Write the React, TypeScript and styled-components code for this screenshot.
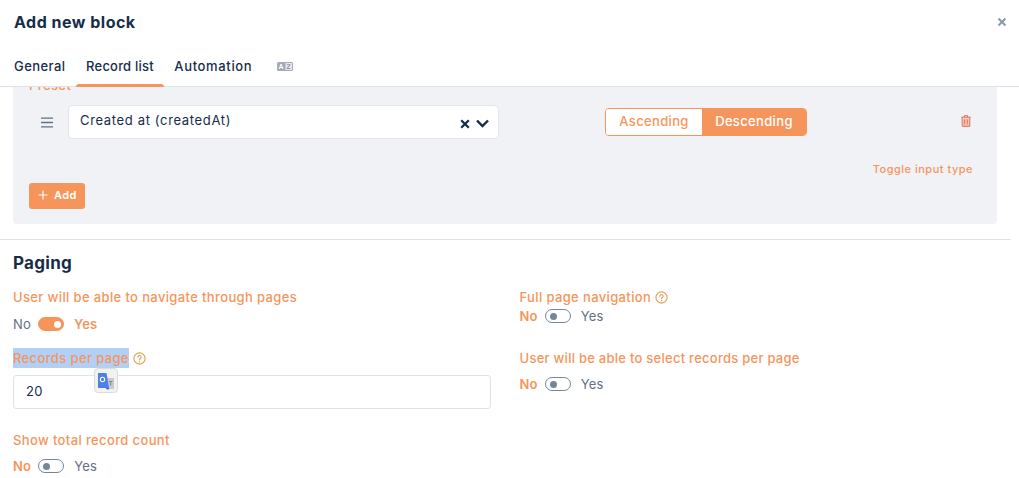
import React from 'react';
import styled, { createGlobalStyle } from 'styled-components';

const navy = '#162d4a';
const orange = '#f6955b';
const slate = '#5f7186';
const switchGrey = '#75869a';

const GlobalStyle = createGlobalStyle`
  html, body {
    margin: 0;
    height: 100%;
    overflow: hidden;
    background: #fff;
  }
  body {
    font-family: Inter, "Open Sans", sans-serif;
    color: ${navy};
  }
`;

const Modal = styled.div`
  width: 1019px;
  height: 478px;
  display: flex;
  flex-direction: column;
  overflow: hidden;
  position: relative;
`;

const Header = styled.header`
  height: 44px;
  display: flex;
  align-items: center;
  justify-content: space-between;
  padding: 0 12px 0 14px;
  flex: none;
`;

const Title = styled.h1`
  margin: 0;
  font-size: 16px;
  line-height: 20px;
  font-weight: 700;
  letter-spacing: 0.5px;
`;

const CloseButton = styled.button`
  border: 0;
  padding: 0;
  background: none;
  width: 10px;
  height: 10px;
  display: flex;
`;

const Tabs = styled.nav`
  height: 43px;
  flex: none;
  display: flex;
  align-items: flex-start;
  padding-left: 3.75px;
  border-bottom: 1px solid #dfe2e8;
  box-sizing: border-box;
`;

const Tab = styled.button<{ $active?: boolean; $tracking?: number }>`
  position: relative;
  border: 0;
  background: none;
  height: 43px;
  padding: 1px 10.25px 0;
  font: 500 13px/20px Inter, sans-serif;
  letter-spacing: ${(p) => p.$tracking ?? 0.45}px;
  color: ${navy};
  display: block;

  ${(p) =>
    p.$active &&
    `
    &::after {
      content: '';
      position: absolute;
      left: 0;
      right: 0;
      bottom: 0;
      height: 3px;
      background: ${orange};
      border-radius: 3px 3px 0 0;
    }
  `}
`;

const IconTab = styled(Tab)`
  padding: 1px 0 0 14.75px;
`;

const Body = styled.main`
  flex: 1;
  overflow: hidden;
  width: 1011px;
`;

const Panel = styled.section`
  margin: -10px 14px 0 13px;
  padding: 0 16px 15px;
  background: #f1f2f6;
  border-radius: 0 0 4px 4px;
`;

const PresetLabel = styled.div`
  font-size: 13px;
  line-height: 16px;
  font-weight: 500;
  letter-spacing: 0.4px;
  color: ${orange};
`;

const SortRow = styled.div`
  display: flex;
  align-items: center;
  margin-top: 12px;
  height: 34px;
`;

const Handle = styled.span`
  width: 39px;
  padding-left: 12px;
  box-sizing: border-box;
  display: flex;
  flex: none;
`;

const SelectBox = styled.div`
  width: 431px;
  height: 34px;
  box-sizing: border-box;
  background: #fff;
  border: 1px solid #e2e5ec;
  border-radius: 4px;
  display: flex;
  align-items: center;
  justify-content: space-between;
  padding: 0 9px 4px 11px;
  font-size: 13px;
  letter-spacing: 0.65px;
  flex: none;
`;

const SelectIcons = styled.span`
  display: flex;
  align-items: center;
  gap: 6px;
  padding-top: 8px;
  margin-bottom: 1px;
`;

const OrderGroup = styled.div`
  margin-left: 106px;
  display: flex;
  height: 28px;
  width: 202px;
  flex: none;
  border: 1px solid ${orange};
  border-radius: 4px;
  box-sizing: border-box;
  overflow: hidden;
`;

const OrderButton = styled.button<{ $active?: boolean; $width: number }>`
  width: ${(p) => p.$width}px;
  border: 0;
  padding: 0 0 2px;
  font: 500 13px/20px Inter, sans-serif;
  letter-spacing: 0.35px;
  background: ${(p) => (p.$active ? orange : '#fff')};
  color: ${(p) => (p.$active ? '#fff' : orange)};
`;

const TrashButton = styled.span`
  margin-left: auto;
  margin-right: 10px;
  margin-bottom: 2px;
  display: flex;
`;

const ToggleLink = styled.div`
  margin-top: 22px;
  padding-right: 8px;
  text-align: right;
  font-size: 11px;
  line-height: 16px;
  font-weight: 500;
  letter-spacing: 0.5px;
  color: ${orange};
`;

const AddButton = styled.button`
  display: flex;
  align-items: center;
  gap: 6px;
  margin-top: 6px;
  height: 26px;
  width: 56px;
  padding: 0 0 2px 9px;
  border: 0;
  border-radius: 3px;
  background: ${orange};
  color: #fff;
  font: 600 11px/14px Inter, sans-serif;
  letter-spacing: 0.4px;
`;

const Divider = styled.hr`
  border: 0;
  height: 1px;
  background: #dfe2e8;
  margin: 15px 0 0;
`;

const Paging = styled.section`
  padding: 13px 0 0 13px;
`;

const SectionTitle = styled.h2`
  margin: 0;
  font-size: 17px;
  line-height: 21px;
  font-weight: 700;
  letter-spacing: 0.3px;
`;

const Columns = styled.div`
  display: grid;
  grid-template-columns: 478px 1fr;
  column-gap: 28.5px;
  margin-top: 14px;
`;

const Column = styled.div`
  display: flex;
  flex-direction: column;
`;

const FieldLabel = styled.div<{ $top?: number; $tracking?: number }>`
  display: flex;
  align-items: center;
  gap: 4px;
  margin-top: ${(p) => p.$top ?? 0}px;
  font-size: 13px;
  line-height: 18px;
  font-weight: 500;
  letter-spacing: ${(p) => p.$tracking ?? 0.37}px;
  color: ${orange};
`;

const Selected = styled.span`
  background: #b2d0f5;
  margin: -1px 0;
  padding: 1px 0;
`;

const SwitchRow = styled.div<{ $top: number; $bottom: number }>`
  display: flex;
  align-items: center;
  gap: 7px;
  height: 18px;
  margin-top: ${(p) => p.$top}px;
  margin-bottom: ${(p) => p.$bottom}px;
  font-size: 13px;
  letter-spacing: 0.2px;
`;

const SwitchText = styled.span<{ $on?: boolean }>`
  color: ${(p) => (p.$on ? orange : slate)};
  font-weight: ${(p) => (p.$on ? 600 : 400)};
`;

const Track = styled.span<{ $on?: boolean }>`
  position: relative;
  display: block;
  width: 26px;
  height: 14px;
  box-sizing: border-box;
  border-radius: 7px;
  margin-right: 3px;
  border: 1px solid ${(p) => (p.$on ? orange : switchGrey)};
  background: ${(p) => (p.$on ? orange : '#fff')};

  &::after {
    content: '';
    position: absolute;
    top: 2.5px;
    left: ${(p) => (p.$on ? '15px' : '4px')};
    width: 7px;
    height: 7px;
    border-radius: 50%;
    background: ${(p) => (p.$on ? '#fff' : switchGrey)};
  }
`;

const ValueInput = styled.div`
  margin-top: 8px;
  height: 34px;
  box-sizing: border-box;
  border: 1px solid #dfe2e8;
  border-radius: 3px;
  padding: 0 12px 2px;
  display: flex;
  align-items: center;
  font-size: 13px;
  letter-spacing: 0.3px;
`;

const TranslateBubble = styled.div`
  position: absolute;
  left: 94px;
  top: 368px;
  width: 24px;
  height: 25px;
  box-sizing: border-box;
  background: #f1f1f1;
  border: 1px solid #dcdcdc;
  border-radius: 4px;
  display: flex;
  align-items: center;
  justify-content: center;
`;

const HelpIcon = () => (
  <svg width="13" height="13" viewBox="0 0 13 13" fill="none" stroke="#dda04f" strokeWidth="1.1">
    <circle cx="6.5" cy="6.5" r="5.6" />
    <path d="M4.9 5.2a1.6 1.6 0 1 1 2.5 1.3c-.6.4-.9.7-.9 1.3" strokeLinecap="round" />
    <path d="M6.5 9.3v.5" strokeLinecap="round" />
  </svg>
);

const Switch = ({ on, top = 0, bottom = 0 }: { on?: boolean; top?: number; bottom?: number }) => (
  <SwitchRow $top={top} $bottom={bottom}>
    <SwitchText $on={!on}>No</SwitchText>
    <Track $on={on} />
    <SwitchText $on={on}>Yes</SwitchText>
  </SwitchRow>
);

export default function App() {
  return (
    <Modal>
      <GlobalStyle />
      <Header>
        <Title>Add new block</Title>
        <CloseButton aria-label="Close">
          <svg width="10" height="10" viewBox="0 0 10 10" stroke="#8c99aa" strokeWidth="2">
            <path d="M1.5 1.5l7 7M8.5 1.5l-7 7" />
          </svg>
        </CloseButton>
      </Header>
      <Tabs>
        <Tab>General</Tab>
        <Tab $active $tracking={0.2}>Record list</Tab>
        <Tab $tracking={0.65}>Automation</Tab>
        <IconTab aria-label="Translations">
          <svg width="16" height="9" viewBox="0 0 16 9">
            <rect width="16" height="9" rx="1.5" fill="#a4abb6" />
            <rect x="8.5" y="1" width="6.5" height="7" fill="#e4e6ea" />
            <path d="M2.2 7l1.9-5 1.9 5M3 5.4h2.2" stroke="#fff" strokeWidth="1" fill="none" />
            <path d="M10 2.7h3.2L10 6.5h3.2" stroke="#8f97a3" strokeWidth="1" fill="none" />
          </svg>
        </IconTab>
      </Tabs>
      <Body>
        <Panel>
          <PresetLabel>Preset</PresetLabel>
          <SortRow>
            <Handle>
              <svg width="12" height="11" viewBox="0 0 12 11" stroke={slate} strokeWidth="1.3">
                <path d="M0 1.2h12M0 5.5h12M0 9.8h12" />
              </svg>
            </Handle>
            <SelectBox>
              Created at (createdAt)
              <SelectIcons>
                <svg width="10" height="10" viewBox="0 0 10 10" stroke={navy} strokeWidth="2.3">
                  <path d="M1.2 1.2l7.6 7.6M8.8 1.2l-7.6 7.6" />
                </svg>
                <svg width="13" height="9" viewBox="0 0 13 9" fill="none" stroke={navy} strokeWidth="2.4">
                  <path d="M1 1.5l5.5 5.5L12 1.5" />
                </svg>
              </SelectIcons>
            </SelectBox>
            <OrderGroup>
              <OrderButton $width={96}>Ascending</OrderButton>
              <OrderButton $active $width={104}>Descending</OrderButton>
            </OrderGroup>
            <TrashButton>
              <svg width="10" height="12" viewBox="0 0 10 12" fill="none">
                <rect x="1.7" y="3.5" width="6.6" height="7.5" fill="#f3c2b0" />
                <path d="M.4 2.2h9.2M3.4 2V.7h3.2V2" stroke="#dc6a52" strokeWidth="1" />
                <path d="M1.2 2.2v9.1h7.6V2.2" stroke="#dc6a52" strokeWidth="1" />
                <path d="M3.6 4.4v5M6.4 4.4v5" stroke="#dc6a52" strokeWidth=".8" />
              </svg>
            </TrashButton>
          </SortRow>
          <ToggleLink>Toggle input type</ToggleLink>
          <AddButton>
            <svg width="10" height="10" viewBox="0 0 10 10" stroke="#fff" strokeWidth="1.2">
              <path d="M5 .5v9M.5 5h9" />
            </svg>
            Add
          </AddButton>
        </Panel>
        <Divider />
        <Paging>
          <SectionTitle>Paging</SectionTitle>
          <Columns>
            <Column>
              <FieldLabel>User will be able to navigate through pages</FieldLabel>
              <Switch on top={9} bottom={16} />
              <FieldLabel>
                <Selected>Records per page</Selected>
                <HelpIcon />
              </FieldLabel>
              <ValueInput>20</ValueInput>
              <FieldLabel $top={22}>Show total record count</FieldLabel>
              <Switch top={8} />
            </Column>
            <Column>
              <FieldLabel>
                Full page navigation
                <HelpIcon />
              </FieldLabel>
              <Switch top={1} bottom={24} />
              <FieldLabel $tracking={0.26}>User will be able to select records per page</FieldLabel>
              <Switch top={8} />
            </Column>
          </Columns>
        </Paging>
      </Body>
      <TranslateBubble>
        <svg width="18" height="18" viewBox="0 0 18 18">
          <path d="M9 6h8v11H9z" fill="#c6c9ce" />
          <path d="M12 9.5h3.4M13.7 9.5v4" stroke="#7f858c" strokeWidth="1" fill="none" />
          <path d="M1 1h8.5l2.6 15H1z" fill="#4a80e8" />
          <path d="M8.5 16h3.6l-1 2z" fill="#3565c4" />
          <circle cx="5.5" cy="7.5" r="2.2" fill="none" stroke="#fff" strokeWidth="1.1" />
        </svg>
      </TranslateBubble>
    </Modal>
  );
}
